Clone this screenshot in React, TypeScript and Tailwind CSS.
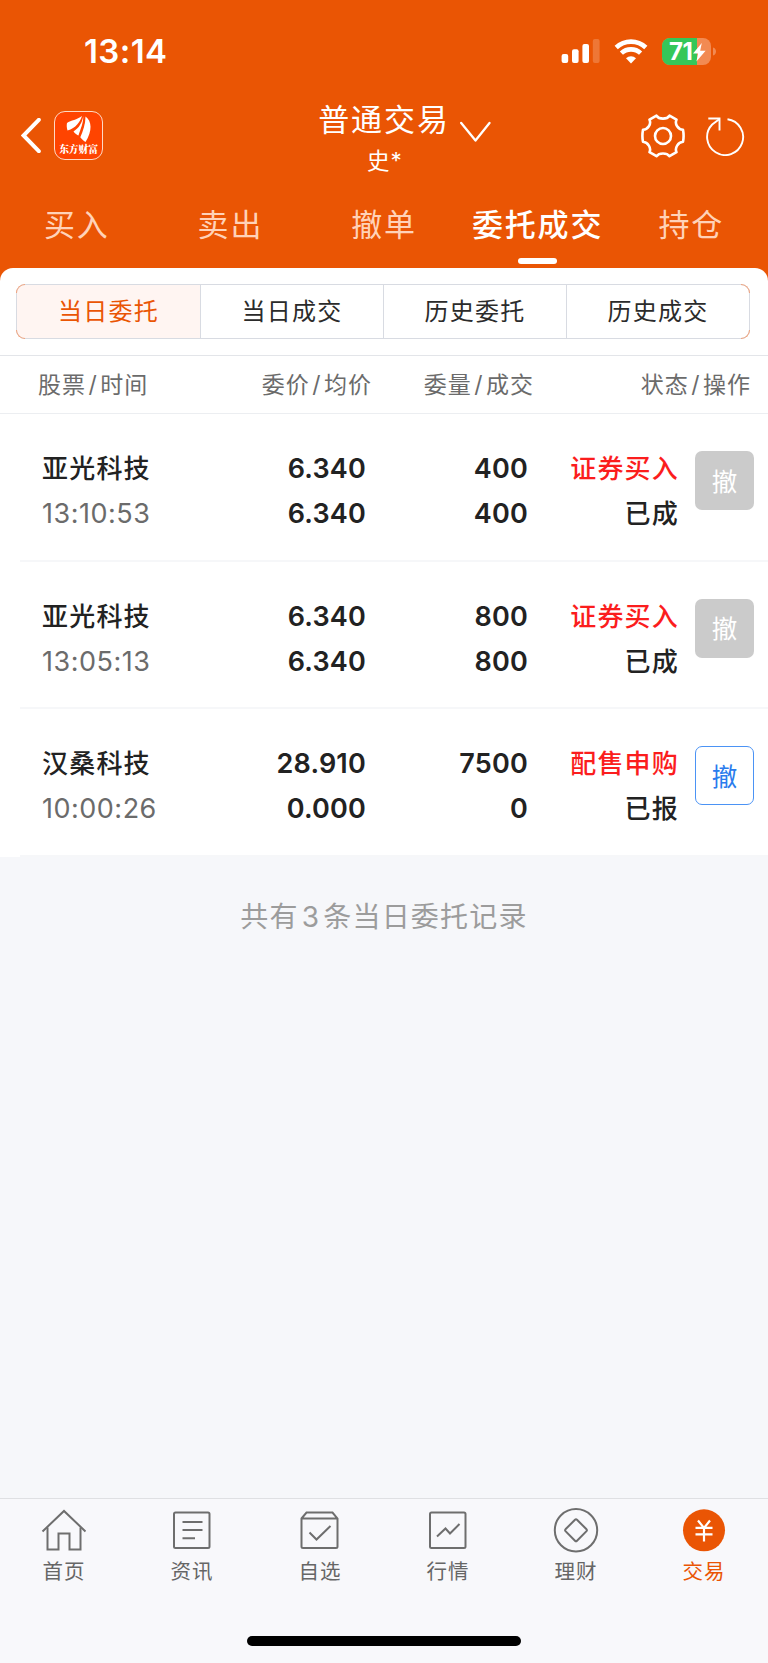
import React from 'react'

const tabs = ['买入', '卖出', '撤单', '委托成交', '持仓']
const segments = ['当日委托', '当日成交', '历史委托', '历史成交']

const orders = [
  { name: '亚光科技', time: '13:10:53', price: '6.340', avg: '6.340', qty: '400', filled: '400', side: '证券买入', status: '已成', open: false },
  { name: '亚光科技', time: '13:05:13', price: '6.340', avg: '6.340', qty: '800', filled: '800', side: '证券买入', status: '已成', open: false },
  { name: '汉桑科技', time: '10:00:26', price: '28.910', avg: '0.000', qty: '7500', filled: '0', side: '配售申购', status: '已报', open: true },
]

const StatusBar = () => (
  <div className="flex h-[102px] items-center justify-between pl-[84px] pr-[52px]">
    <span className="text-[33px] font-semibold leading-[36px] tracking-[0.4px]">13:14</span>
    <div className="flex items-center">
      <svg width="39" height="26" viewBox="0 0 39 26" fill="#fff">
        <rect x="0.6" y="16" width="6.6" height="9" rx="2" />
        <rect x="11" y="11.3" width="6.6" height="13.7" rx="2" />
        <rect x="21.4" y="6" width="6.6" height="19" rx="2" />
        <rect x="31.8" y="1" width="6.8" height="24" rx="2" opacity=".2" />
      </svg>
      <svg className="ml-[14px]" width="34" height="26" viewBox="0 0 34 26" fill="none" stroke="#fff" strokeWidth="4.6">
        <path d="M2.2 9.5a21.5 21.5 0 0 1 29.6 0" />
        <path d="M7.4 15.2a14 14 0 0 1 19.2 0" />
        <path d="M17 25.4l-5-5.2a7.4 7.4 0 0 1 10 0z" fill="#fff" stroke="none" />
      </svg>
      <div className="relative ml-[14px] flex h-[27px] w-[49px] items-center overflow-hidden rounded-[8px] bg-[#f28a52]">
        <div className="h-full w-[35px] bg-[#34c759]" />
        <span className="absolute left-[7px] top-0 text-[24px] font-bold leading-[27px] tracking-[-0.5px]">71</span>
        <svg className="absolute left-[31px] top-[5px]" width="13" height="19" viewBox="0 0 13 19" fill="#fff">
          <path d="M8.8 0L0 10.6h5.1L3.4 18.6 12.6 7.7H7.2z" />
        </svg>
      </div>
      <svg className="ml-[2px]" width="3" height="9" viewBox="0 0 3 9">
        <path d="M0 0.5C4 1.5 4 7.5 0 8.5z" fill="#f28a52" />
      </svg>
    </div>
  </div>
)

const AppLogo = () => (
  <div className="ml-[13px] flex h-[49px] w-[49px] flex-col items-center rounded-[11px] border border-[#ffd9c4] bg-[#ff4400]">
    <svg className="mt-[3px] shrink-0" width="28" height="28" viewBox="0 0 28 28" fill="#fff">
      <path d="M2 8C6 5 12 5 17 1C15 7 11 13 2.5 15.500C1.700 13 1.500 10 2 8Z" />
      <path d="M18.300 1C18.500 8 15.500 14 13.500 20.500C12 20 10 18.500 8.500 16.500C14 13 17 8 18.300 1Z" />
      <path d="M20.500 1.500C27 6 27.500 16 20.500 27C18.500 25.500 16.500 24 15.300 22.200C18 16 20.500 9 20.500 1.500Z" />
      <path d="M19.100 1C20 8 17 15 14.200 21" fill="none" stroke="#ff4400" strokeWidth="0.8" />
    </svg>
    <span className="mt-[1px] whitespace-nowrap font-['Noto_Serif_CJK_SC','Noto_Sans_CJK_SC',serif] text-[9.700px] font-black leading-[11px]">东方财富</span>
  </div>
)

const Header = () => (
  <div className="grid h-[84px] grid-cols-[1fr_auto_1fr] items-start">
    <div className="flex items-center pl-[21px] pt-[9px]">
      <svg width="20" height="35" viewBox="0 0 20 35" fill="none" stroke="#fff" strokeWidth="4">
        <path d="M17.800 1.800L2.500 17.500L17.800 33.200" strokeLinecap="round" />
      </svg>
      <AppLogo />
    </div>
    <div className="relative flex h-[84px] flex-col items-center">
      <span className="text-[31px] leading-[36px] tracking-[1.900px]">普通交易</span>
      <span className="mt-[5px] pl-[2px] text-[22.500px] leading-[36px] tracking-[1px]">史*</span>
      <svg className="absolute left-[142px] top-[19px]" width="31" height="22" viewBox="0 0 31 22" fill="none" stroke="#fff" strokeWidth="2.300">
        <path d="M1.200 2L15.500 19.500L29.500 2" strokeLinecap="round" strokeLinejoin="round" />
      </svg>
    </div>
    <div className="flex items-center justify-end pr-[23px] pt-[12px]">
      <svg width="44" height="44" viewBox="0 0 44 44" fill="none" stroke="#fff" strokeWidth="2.600" strokeLinejoin="round">
        <path d="M15.500 1.700C18 5.600 26 5.600 28.500 1.700L35.500 5.700C33.500 10 37 15.500 42 15.700Q43.200 22 42 27.800C37 28.200 33.500 34 35.500 38.200L28.500 42.200C26 38.500 18 38.500 15.500 42.200L8.500 38.200C10.500 34 7 28.200 2 27.800Q0.800 22 2 15.700C7 15.500 10.500 10 8.500 5.700Z" />
        <circle cx="22" cy="22" r="8" />
      </svg>
      <svg className="ml-[20px]" width="40" height="40" viewBox="0 0 40 40" fill="none" stroke="#fff" strokeWidth="1.900">
        <path d="M22.500 3.200A18 18 0 1 1 7.200 8.500L14.500 3" />
        <path d="M3.300 2.500H14.500V14.500" />
      </svg>
    </div>
  </div>
)

const Tabs = () => (
  <div className="grid h-[82px] grid-cols-5">
    {tabs.map((tab) => {
      const active = tab === '委托成交'
      return (
        <div key={tab} className="flex flex-col items-center pt-[19px]">
          <span className={active ? 'whitespace-nowrap text-[31px] font-medium leading-[40px] tracking-[1.800px]' : 'text-[31px] font-normal leading-[40px] tracking-[1.800px] text-[#ffd2b8]'}>
            {tab}
          </span>
          {active && <div className="mt-[13px] h-[6px] w-[39px] rounded-[3px] bg-white" />}
        </div>
      )
    })}
  </div>
)

const Segments = () => (
  <div className="border-b border-[#e3e5e9] pb-4 pl-[16px] pr-[18px] pt-4">
    <div className="relative">
      <div className="grid h-[55px] grid-cols-4 overflow-hidden rounded-[9px] border border-[#d8dbe2]">
        {segments.map((label, i) => (
          <div
            key={label}
            className={
              i === 0
                ? 'flex items-center justify-center bg-[#fff5f2] pt-px text-[24px] tracking-[1.300px] text-[#ea5504]'
                : 'flex items-center justify-center border-l border-[#d8dbe2] pt-px text-[24px] tracking-[1.300px] text-[#2b2b2b]'
            }
          >
            {label}
          </div>
        ))}
      </div>
      {/* tinted corners */}
      <span className="absolute left-0 top-0 h-[9px] w-[9px] rounded-tl-[9px] border-l border-t border-[#f0a27c]" />
      <span className="absolute bottom-0 left-0 h-[9px] w-[9px] rounded-bl-[9px] border-b border-l border-[#f0a27c]" />
      <span className="absolute right-0 top-0 h-[9px] w-[9px] rounded-tr-[9px] border-r border-t border-[#f0a27c]" />
      <span className="absolute bottom-0 right-0 h-[9px] w-[9px] rounded-br-[9px] border-b border-r border-[#f0a27c]" />
    </div>
  </div>
)

const OrderRow = ({ order }: { order: (typeof orders)[number] }) => (
  <div className="ml-5 flex h-[147.500px] border-b-2 border-[#f6f7f9] pl-[22px] pr-[14px] pt-[32px] text-[26px] font-medium leading-[45px] tracking-[1.200px] text-[#222]">
    <div className="w-[150px]">
      <div>{order.name}</div>
      <div className="text-[27px] font-normal tracking-[0.500px] text-[#6b6b6b]">{order.time}</div>
    </div>
    <div className="w-[174px] text-right text-[27px] font-semibold tracking-[0.200px]">
      <div>{order.price}</div>
      <div>{order.avg}</div>
    </div>
    <div className="w-[162px] text-right text-[27px] font-semibold tracking-[0.200px]">
      <div>{order.qty}</div>
      <div>{order.filled}</div>
    </div>
    <div className="w-[151px] text-right">
      <div className="text-[#fb1d1d]">{order.side}</div>
      <div>{order.status}</div>
    </div>
    <div
      className={
        order.open
          ? 'ml-auto mt-[5px] flex h-[59px] w-[59px] items-center justify-center rounded-[7px] border border-[#4b93f5] pt-px text-[25.500px] font-normal tracking-normal text-[#2a7ced]'
          : 'ml-auto mt-[5px] flex h-[59px] w-[59px] items-center justify-center rounded-[7px] bg-[#cbcbcb] pt-px text-[25.500px] font-normal tracking-normal text-white'
      }
    >
      撤
    </div>
  </div>
)

const navIcons = [
  {
    label: '首页',
    icon: (
      <>
        <path d="M1.500 23.500L23 3L44.500 23.500" />
        <path d="M6.500 19.500V41.500H17.500V25.500H28.500V41.500H39.500V19.500" />
      </>
    ),
  },
  {
    label: '资讯',
    icon: (
      <>
        <rect x="5" y="4.500" width="35.500" height="35.500" rx="1.500" />
        <path d="M13.500 14H33.500M13.500 22H33.500M13.500 30.300H26" />
      </>
    ),
  },
  {
    label: '自选',
    icon: (
      <>
        <path d="M4.500 10.500L9.500 4.500H35.500L40.500 10.500V38.500Q40.500 40 39 40H6Q4.500 40 4.500 38.500ZM4.500 10.500H40.500" />
        <path d="M12.500 24.500L19.500 31.500L33.500 18" />
      </>
    ),
  },
  {
    label: '行情',
    icon: (
      <>
        <rect x="5" y="4.500" width="35.500" height="35.500" rx="1.500" />
        <path d="M12 28.500L20.500 20.500L25 25.500L34.500 16" />
      </>
    ),
  },
  {
    label: '理财',
    icon: (
      <>
        <circle cx="23" cy="22.300" r="21.200" />
        <path d="M22 11.700Q23 10.700 24 11.700L33.500 21.300Q34.300 22.200 33.500 23.100L24 32.800Q23 33.800 22 32.800L12.500 23.100Q11.700 22.200 12.500 21.300Z" />
      </>
    ),
  },
  {
    label: '交易',
    icon: (
      <>
        <circle cx="23" cy="22.300" r="21" fill="#ea5504" stroke="none" />
        <path d="M17 12.500L23 20L29 12.500M23 20V33.500M14.500 19.800H31.500M14.500 26.300H31.500" stroke="#fff" strokeWidth="2.200" />
      </>
    ),
  },
]

const BottomNav = () => (
  <div className="flex h-[165px] flex-col border-t border-[#dfe0e3] bg-[#f8f8fb]">
    <div className="grid grid-cols-6 pt-[9px]">
      {navIcons.map((item) => (
        <div key={item.label} className="flex flex-col items-center">
          <svg width="46" height="46" viewBox="0 0 46 46" fill="none" stroke="#6e6e6e" strokeWidth="2">
            {item.icon}
          </svg>
          <span className={item.label === '交易' ? 'mt-[5px] text-[20.500px] leading-[26px] tracking-[1px] text-[#ea5504]' : 'mt-[5px] text-[20.500px] leading-[26px] tracking-[1px] text-[#666]'}>
            {item.label}
          </span>
        </div>
      ))}
    </div>
    <div className="mx-auto mb-[17px] mt-auto h-[10px] w-[274px] rounded-full bg-black" />
  </div>
)

const App = () => {
  return (
    <div className="flex h-[1663px] w-[768px] flex-col overflow-hidden bg-[#f6f7fa] font-['Inter','Noto_Sans_CJK_SC',sans-serif]">
      <div className="bg-[#ea5504] text-white">
        <StatusBar />
        <Header />
        <Tabs />
      </div>
      <div className="bg-[#ea5504]">
        <div className="rounded-t-[13px] bg-white">
          <Segments />
          <div className="flex h-[58px] items-center border-b border-[#eceef1] pl-[38px] pr-[17px] pt-[2px] text-[23px] tracking-[1px] text-[#6b6b6b]">
            <div className="w-[110px] whitespace-nowrap">股票<span className="mx-[2.500px]">/</span>时间</div>
            <div className="w-[224px] text-right">委价<span className="mx-[2.500px]">/</span>均价</div>
            <div className="w-[162px] text-right">委量<span className="mx-[2.500px]">/</span>成交</div>
            <div className="ml-auto">状态<span className="mx-[2.500px]">/</span>操作</div>
          </div>
          {orders.map((order) => (
            <OrderRow key={order.time} order={order} />
          ))}
        </div>
      </div>
      <div className="pt-[40px] text-center text-[28px] leading-[40px] tracking-[1.200px] text-[#9c9c9c]">
        共有<span className="mx-[3px]">3</span>条当日委托记录
      </div>
      <div className="mt-auto">
        <BottomNav />
      </div>
    </div>
  )
}

export default App
